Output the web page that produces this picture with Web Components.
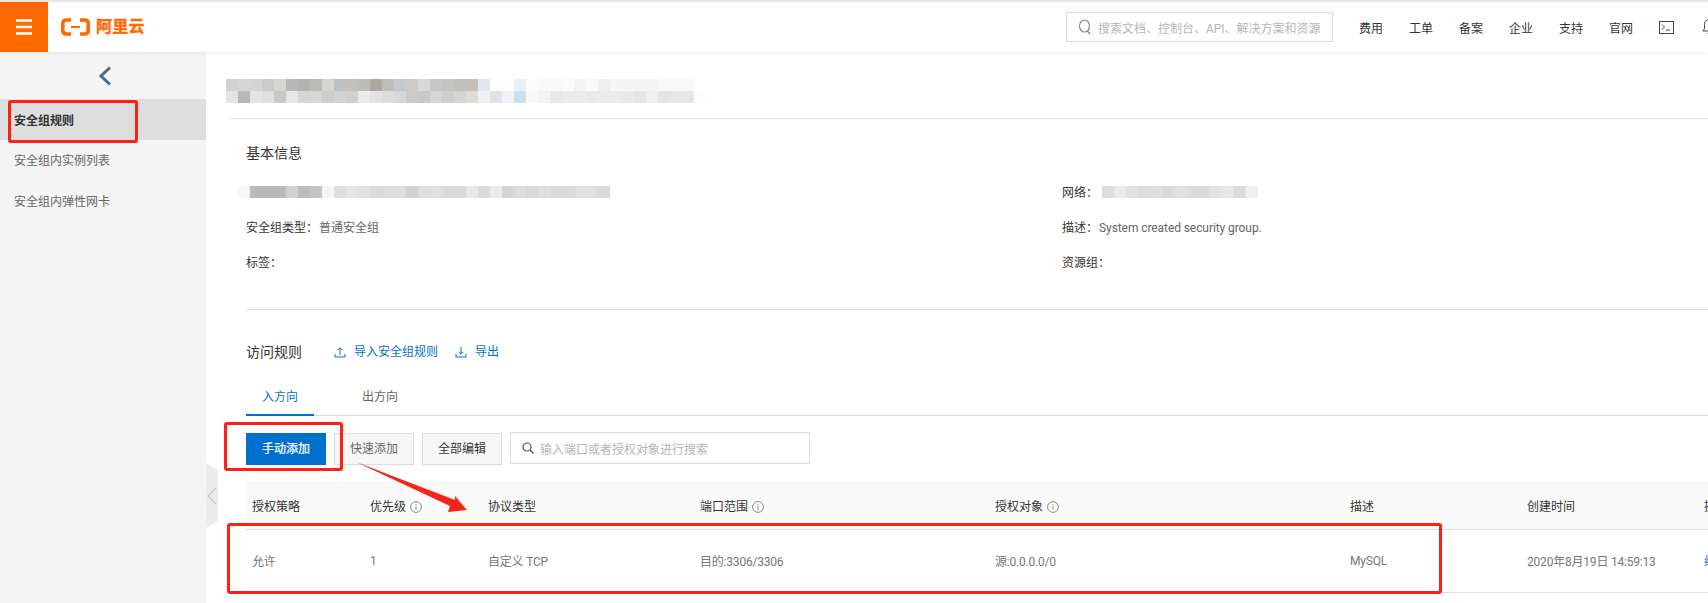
<!DOCTYPE html>
<html lang="zh">
<head>
<meta charset="utf-8">
<title>安全组规则</title>
<style>
  html, body { margin: 0; padding: 0; background: #fff; overflow: hidden; }
  body { width: 1708px; height: 603px; font: 12px Roboto, "Noto Sans CJK SC", sans-serif; color: #333; }
</style>
</head>
<body>
<console-page>
  <console-topbar slot="top"></console-topbar>
  <console-sidebar slot="side"></console-sidebar>
  <group-detail></group-detail>
</console-page>
<mark-layer></mark-layer>

<script>
const FONT = 'Roboto, "Noto Sans CJK SC", sans-serif';

class ConsolePage extends HTMLElement {
    constructor() {
        super();
        this.attachShadow({ mode: 'open' });
        this.shadowRoot.innerHTML = `
            <style>
                :host { display: flex; flex-direction: column; width: 1708px; height: 603px; overflow: hidden; font-family: ${FONT}; }
                .body { display: flex; flex: 1; min-height: 0; }
            </style>
            <slot name="top"></slot>
            <div class="body">
                <slot name="side"></slot>
                <slot></slot>
            </div>
        `;
    }
}

class ConsoleTopbar extends HTMLElement {
    constructor() {
        super();
        this.attachShadow({ mode: 'open' });
        const links = ['费用', '工单', '备案', '企业', '支持', '官网'].map(t => `<span>${t}</span>`).join('');
        this.shadowRoot.innerHTML = `
            <style>
                :host { display: flex; align-items: stretch; height: 50px; border-top: 2px solid #e6e6e6; background: #fff;
                        box-shadow: 0 2px 5px rgba(0,0,0,.05); position: relative; z-index: 1; flex: none; }
                .burger { width: 48px; background: #ff6a00; display: flex; align-items: center; justify-content: center; flex: none; }
                .logo { display: flex; align-items: center; margin-left: 13px; gap: 6px; color: #ff6a00; font-size: 16px; font-weight: 700; line-height: 20px; -webkit-text-stroke: .4px #ff6a00; letter-spacing: .3px; }
                .right { display: flex; align-items: center; gap: 26px; margin-left: auto; margin-right: -9px; flex: none; }
                .search { box-sizing: border-box; width: 267px; height: 30px; border: 1px solid #dcdcdc; display: flex; align-items: center;
                          padding-left: 11px; gap: 6px; color: #b5b5b5; font-size: 12px; white-space: nowrap; overflow: hidden; }
                .nav { display: flex; gap: 26px; color: #333; font-size: 12px; }
                .icons { display: flex; gap: 27px; align-items: center; }
                svg { display: block; }
            </style>
            <div class="burger">
                <svg width="16" height="16" viewBox="0 0 16 16"><path d="M0 1.5h16M0 8h16M0 14.5h16" stroke="#fff" stroke-width="2.4"/></svg>
            </div>
            <div class="logo">
                <svg width="29" height="18" viewBox="0 0 29 18" fill="none" stroke="#ff6a00" stroke-width="3.6">
                    <path d="M10 2H5.500Q1.800 2 1.800 5.500v7Q1.800 16 5.500 16H10"/>
                    <path d="M19 2h4.500q3.700 0 3.700 3.500v7q0 3.500-3.700 3.500H19"/>
                    <path d="M10 9h9" stroke-width="2"/>
                </svg>
                <span>阿里云</span>
            </div>
            <div class="right">
                <div class="search">
                    <svg width="14" height="16" viewBox="0 0 14 16" fill="none" stroke="#888" stroke-width="1.2"><ellipse cx="6.5" cy="7" rx="5" ry="6"/><path d="M9.5 12l2.5 3"/></svg>
                    <span>搜索文档、控制台、API、解决方案和资源</span>
                </div>
                <div class="nav">${links}</div>
                <div class="icons">
                    <svg width="15" height="13" viewBox="0 0 15 13" fill="none" stroke="#444"><rect x=".5" y=".5" width="14" height="12"/><path d="M3 3.500l2.500 2.500L3 8.500M7 9h4"/></svg>
                    <svg width="16" height="18" viewBox="0 0 16 18" fill="none" stroke="#444"><path d="M8 1.500c-3 0-4.500 2.200-4.500 5v4L2 13h12l-1.500-2.500v-4c0-2.800-1.500-5-4.500-5zM6.500 15.500h3"/></svg>
                </div>
            </div>
        `;
    }
}

class ConsoleSidebar extends HTMLElement {
    constructor() {
        super();
        this.attachShadow({ mode: 'open' });
        this.shadowRoot.innerHTML = `
            <style>
                :host { display: block; width: 206px; flex: none; background: #f4f4f4; }
                .back { height: 47px; display: flex; justify-content: center; align-items: center; padding-left: 4px; box-sizing: border-box; }
                .item { height: 41px; line-height: 43px; padding-left: 14px; font-size: 12px; color: #666; }
                .item.on { background: #dedede; color: #333; font-weight: 700; line-height: 45px; }
                svg { display: block; }
            </style>
            <div class="back">
                <svg width="14" height="20" viewBox="0 0 14 20" fill="none" stroke="#4d6a85" stroke-width="3"><path d="M12 1.500L3 10l9 8.500"/></svg>
            </div>
            <div class="item on">安全组规则</div>
            <div class="item">安全组内实例列表</div>
            <div class="item">安全组内弹性网卡</div>
        `;
    }
}

class PixelBlur extends HTMLElement {
    constructor() {
        super();
        this.attachShadow({ mode: 'open' });
    }
    connectedCallback() {
        const cell = this.getAttribute('cell') || '12';
        const rows = this.getAttribute('rows').split('|').map(r => r.split(','));
        const cells = rows.flat().map(c => `<i style="background:#${c}"></i>`).join('');
        this.shadowRoot.innerHTML = `
            <style>
                :host { display: grid; grid-template-columns: repeat(${rows[0].length}, ${cell}px); grid-auto-rows: 12px; width: max-content; }
                i { display: block; }
            </style>
            ${cells}
        `;
    }
}

class InfoIcon extends HTMLElement {
    constructor() {
        super();
        this.attachShadow({ mode: 'open' });
        this.shadowRoot.innerHTML = `
            <style>:host { display: inline-block; width: 12px; height: 12px; vertical-align: -2px; margin-left: 4px; } svg { display: block; }</style>
            <svg width="12" height="12" viewBox="0 0 12 12" fill="none" stroke="#8a8a8a"><circle cx="6" cy="6" r="5.400"/><path d="M6 5.200v3.600M6 3v1.200"/></svg>
        `;
    }
}

class GroupDetail extends HTMLElement {
    constructor() {
        super();
        this.attachShadow({ mode: 'open' });
        this.shadowRoot.innerHTML = `
            <style>
                :host { display: block; flex: 1; min-width: 0; overflow: hidden; padding-top: 27px; padding-left: 20px; box-sizing: border-box; font-size: 12px; color: #333; }
                .rule1 { height: 1px; background: #e0e0e0; margin: 15px 0 0 4px; }
                .inner { padding-left: 20px; }
                h3 { font-size: 14px; font-weight: 400; line-height: 20px; margin: 0; color: #333; }
                .title { margin-top: 24px; }
                .info { display: grid; grid-template-columns: 816px 1fr; grid-auto-rows: 35px; margin-top: 11px; align-items: center; }
                .info .v { color: #666; margin-left: 1px; }
                .info .en { letter-spacing: -.08px; }
                .masked { margin-left: -8px; }
                .net { display: flex; align-items: center; }
                .net pixel-blur { margin-left: 4px; }
                .rule2 { height: 1px; background: #e0e0e0; margin-top: 30px; }
                .rules-head { display: flex; align-items: center; margin-top: 32px; line-height: 20px; }
                .link { display: flex; align-items: center; gap: 8px; color: #0070cc; }
                .rules-head .link:first-of-type { margin-left: 32px; }
                .rules-head .link + .link { margin-left: 17px; }
                .link svg { display: block; }
            </style>
            <pixel-blur cell="12" rows="d3d2d0,d6d6d8,d3d3d2,cbcac8,d6d6d3,b7b8b7,b4b3b1,bcbab9,d5d5d2,bdc1c3,c2c1bd,bcbcb9,aca7a1,bebdbc,c5c9cc,ccc9c6,d9d9da,c6c8c6,c4c5c3,c2bfbc,c5bfb8,e3e8ec,fefefe,fdfdfd,e9f0f8,fcfcfb,fafafa,f9f9f9,fcfcfc,f4f4f4,f9f9f9,efefef,f6f6f6,f5f5f5,f4f4f4,f5f5f5,f8f8f8,f8f8f8,f9f9f9,ffffff|e5e4e2,b9b9b9,e3e5e7,e0dfdd,c7c8c7,e5e7e6,d6d6d6,d7d7d6,cdcdcd,d2d3d3,d0d1cf,ebebeb,e2e2e2,dededc,d8d8da,cbcacf,cac9c6,d5d6d8,cdcdcd,d5d5d3,e0ddd8,eff0f3,e2e2e2,eff2f8,cbdff0,f9f9f9,f4f4f2,e9e9e9,ebebeb,ebebeb,e9e9e9,ebebeb,ebebeb,e9e9e9,e5e5e5,f0efed,e3e4e4,e5e6e6,e6e6e6,fdfdfd"></pixel-blur>
            <div class="rule1"></div>
            <div class="inner">
                <h3 class="title">基本信息</h3>
                <div class="info">
                    <div class="masked"><pixel-blur cell="12" rows="f6f6f4,b9bbb9,b9bab8,babbb9,d2d2cf,bbbcbd,c6c5c0,f3f4f6,dfdfdd,e6e6e8,e1e1e3,dedadf,e0dde0,e0dde0,d2d2d0,dfdfdd,dfe0df,dcd8dd,dadade,e9e9e9,d8dedf,ebebec,d6d6d6,dddde0,d9d9d9,dfdfdf,dadadd,dedbe0,e0e0dc,dfe1df,d9d9d9"></pixel-blur></div>
                    <div class="net">网络：<pixel-blur cell="12" rows="dedede,ebebeb,e0e0e0,dddddd,dfdfdf,dbd8d9,e0e1e1,dcdce1,dedcdf,e2e1e0,e6e6e6,dbdbdb,f0f0f3"></pixel-blur></div>
                    <div>安全组类型：<span class="v">普通安全组</span></div>
                    <div>描述：<span class="v en">System created security group.</span></div>
                    <div>标签：</div>
                    <div>资源组：</div>
                </div>
                <div class="rule2"></div>
                <div class="rules-head">
                    <h3>访问规则</h3>
                    <span class="link">
                        <svg width="12" height="12" viewBox="0 0 12 12" fill="none" stroke="#0070cc"><path d="M6 9V2M3.800 4L6 1.800 8.200 4M1 8v3h10V8"/></svg>
                        导入安全组规则</span>
                    <span class="link">
                        <svg width="12" height="12" viewBox="0 0 12 12" fill="none" stroke="#0070cc"><path d="M6 1v7M3.800 6L6 8.200 8.200 6M1 8v3h10V8"/></svg>
                        导出</span>
                </div>
                <rule-tabs></rule-tabs>
                <rule-toolbar></rule-toolbar>
                <rule-table></rule-table>
            </div>
        `;
    }
}

class RuleTabs extends HTMLElement {
    constructor() {
        super();
        this.attachShadow({ mode: 'open' });
        this.shadowRoot.innerHTML = `
            <style>
                :host { display: flex; gap: 32px; margin-top: 16px; height: 37px; border-bottom: 1px solid #dcdcdc; }
                span { width: 68px; height: 37px; line-height: 39px; text-align: center; color: #666; box-sizing: border-box; }
                .on { color: #0070cc; border-bottom: 2px solid #0070cc; height: 38px; }
            </style>
            <span class="on">入方向</span><span>出方向</span>
        `;
    }
}

class RuleToolbar extends HTMLElement {
    constructor() {
        super();
        this.attachShadow({ mode: 'open' });
        this.shadowRoot.innerHTML = `
            <style>
                :host { display: flex; gap: 8px; margin-top: 17px; height: 32px; }
                button { width: 80px; height: 32px; padding: 0 0 3px; border: 1px solid #dcdcdc; background: #f7f7f7; color: #666; font: 12px ${FONT}; }
                button.primary { background: #0070cc; border-color: #0070cc; color: #fff; -webkit-text-stroke: .25px #fff; }
                button.dark { color: #333; }
                .find { box-sizing: border-box; width: 300px; height: 32px; margin-top: -1px; border: 1px solid #dcdcdc; display: flex; align-items: center; gap: 6px; padding-left: 11px; color: #b5b5b5; background: #fff; }
                svg { display: block; flex: none; }
            </style>
            <button class="primary">手动添加</button>
            <button>快速添加</button>
            <button class="dark">全部编辑</button>
            <div class="find">
                <svg width="12" height="12" viewBox="0 0 12 12" fill="none" stroke="#555" stroke-width="1.200"><circle cx="5" cy="5" r="4"/><path d="M8 8l3.500 3.500"/></svg>
                <span>输入端口或者授权对象进行搜索</span>
            </div>
        `;
    }
}

class RuleTable extends HTMLElement {
    constructor() {
        super();
        this.attachShadow({ mode: 'open' });
        const heads = [['授权策略'], ['优先级', 1], ['协议类型'], ['端口范围', 1], ['授权对象', 1], ['描述'], ['创建时间'], ['操作']];
        const cols = ['允许', '1', '自定义 TCP', '目的:3306/3306', '源:0.0.0.0/0', 'MySQL', '2020年8月19日 14:59:13', '<span class="a">编辑</span>'];
        this.shadowRoot.innerHTML = `
            <style>
                :host { display: block; margin-top: 16px; width: 1660px; font-size: 12px; }
                .grid { display: grid; grid-template-columns: 124px 118px 212px 295px 355px 177px 177px 200px; align-items: center; white-space: nowrap; }
                .grid > div:first-child { padding-left: 6px; }
                .head { height: 48px; background: #fafafa; color: #333; border-bottom: 1px solid #dcdcdc; }
                .row { box-sizing: border-box; height: 63px; padding-bottom: 1px; color: #777; border-bottom: 1px solid #e0e0e0; letter-spacing: -.2px; }
                .a { color: #0070cc; }
            </style>
            <div class="grid head">${heads.map(h => `<div>${h[0]}${h[1] ? '<info-icon></info-icon>' : ''}</div>`).join('')}</div>
            <div class="grid row">${cols.map(c => `<div>${c}</div>`).join('')}</div>
        `;
    }
}

// red markup drawn on top of the screenshot, plus the side collapse handle
class MarkLayer extends HTMLElement {
    constructor() {
        super();
        this.attachShadow({ mode: 'open' });
        this.shadowRoot.innerHTML = `
            <style>
                :host { position: absolute; left: 0; top: 0; width: 1708px; height: 603px; pointer-events: none; z-index: 5; }
                .box { position: absolute; box-sizing: border-box; border: 3px solid #ff2015; border-radius: 3px; }
                svg { position: absolute; left: 0; top: 0; }
            </style>
            <svg width="1708" height="603" viewBox="0 0 1708 603">
                <path d="M206 463l12 7v51l-12 7z" fill="#ececec"/>
                <path d="M216 488l-8 8 8 8" fill="none" stroke="#c8c8c8" stroke-width="1.200"/>
                <path d="M356 462L455 500L455 496L467 510L448 512L450 506Z" fill="#f5231a"/>
            </svg>
            <div class="box" style="left:8px;top:100px;width:130px;height:43px"></div>
            <div class="box" style="left:224px;top:422px;width:119px;height:49px"></div>
            <div class="box" style="left:227px;top:523px;width:1215px;height:71px"></div>
        `;
    }
}

customElements.define('console-page', ConsolePage);
customElements.define('console-topbar', ConsoleTopbar);
customElements.define('console-sidebar', ConsoleSidebar);
customElements.define('pixel-blur', PixelBlur);
customElements.define('info-icon', InfoIcon);
customElements.define('group-detail', GroupDetail);
customElements.define('rule-tabs', RuleTabs);
customElements.define('rule-toolbar', RuleToolbar);
customElements.define('rule-table', RuleTable);
customElements.define('mark-layer', MarkLayer);
</script>
</body>
</html>
